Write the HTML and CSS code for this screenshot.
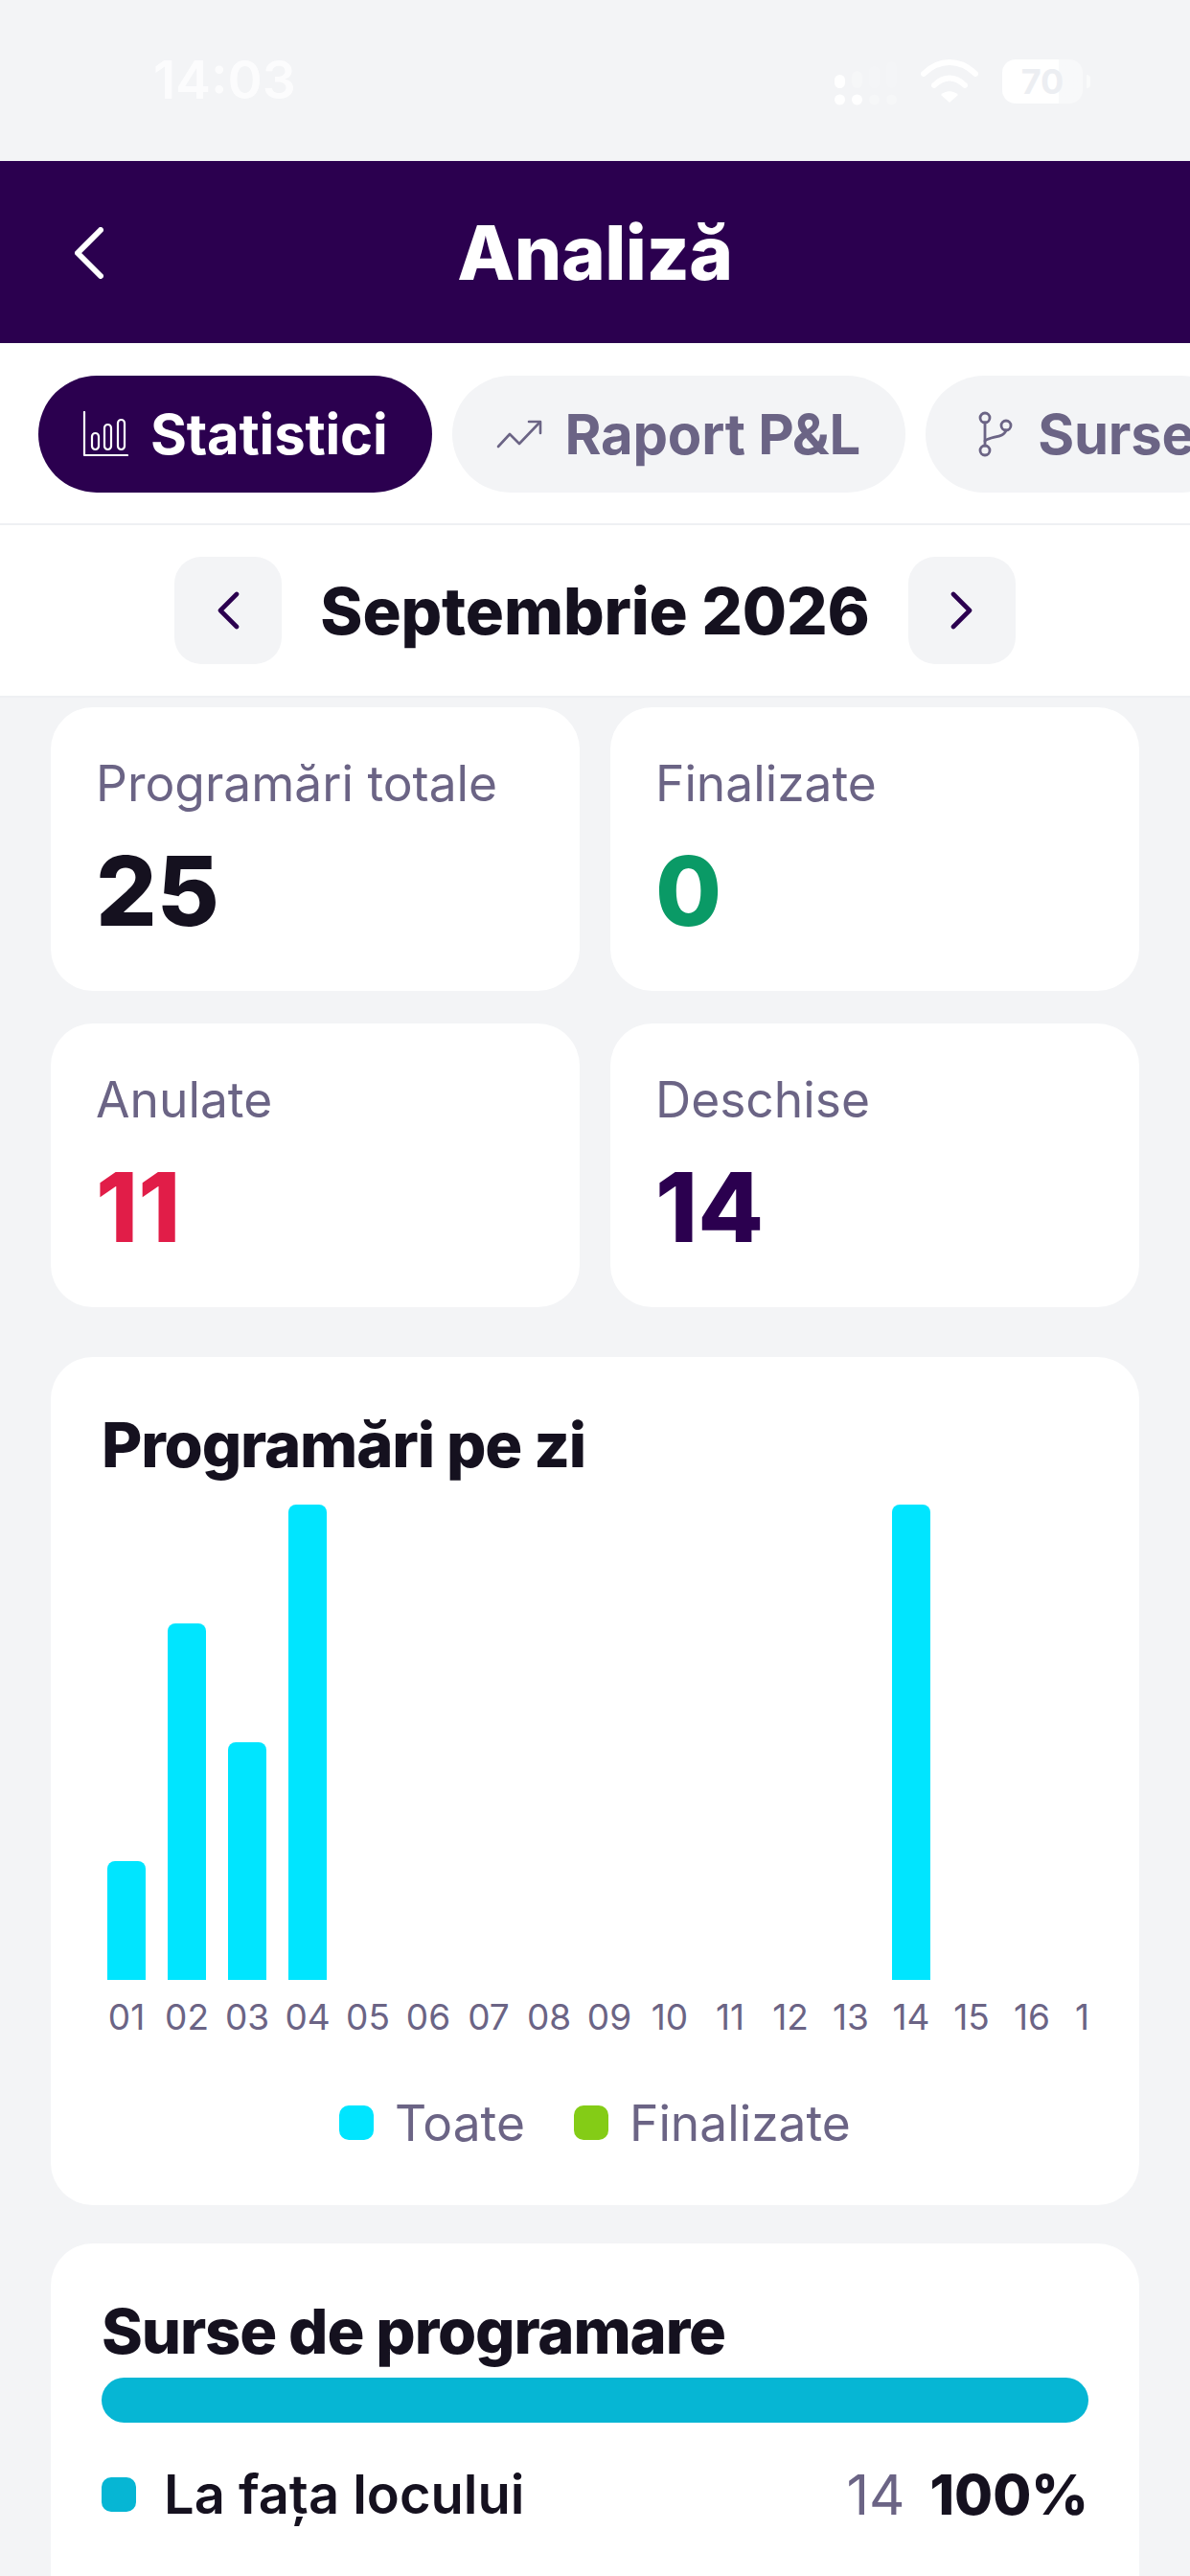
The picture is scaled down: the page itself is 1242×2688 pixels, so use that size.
FILE: index.html
```html
<!DOCTYPE html>
<html lang="ro">
<head>
  <meta charset="UTF-8" />
  <meta name="viewport" content="width=device-width, initial-scale=1.0"/>
  <title>Analiză</title>
  <link rel="stylesheet" href="styles.css">
</head>
<body>
  <div class="app">
    <!-- Status bar -->
    <div class="status-bar">
      <span class="status-time">14:03</span>
      <div class="status-icons">
        <svg class="icon-signal" viewBox="0 0 66 46" fill="#fff">
          <rect x="0" y="14" width="11" height="14" rx="5.5"/>
          <rect x="18" y="10" width="11" height="18" rx="5.5" opacity=".25"/>
          <rect x="36" y="5" width="11" height="23" rx="5.5" opacity=".15"/>
          <rect x="54" y="0" width="11" height="28" rx="5.5" opacity=".1"/>
          <circle cx="5.5" cy="40" r="5.5"/>
          <circle cx="23.5" cy="40" r="5.5"/>
          <circle cx="41.5" cy="40" r="5.5" opacity=".25"/>
          <circle cx="59.5" cy="40" r="5.5" opacity=".25"/>
        </svg>
        <svg class="icon-wifi" viewBox="0 0 60 46" fill="none" stroke="#fff" stroke-width="6" stroke-linecap="round">
          <path d="M3 15C19 -1 41 -1 57 15"/>
          <path d="M14 27C24 17 36 17 46 27"/>
          <path d="M30 45L21 37C26 32 34 32 39 37Z" fill="#fff" stroke="none"/>
        </svg>
        <div class="battery"><div class="battery-body"><span>70</span></div><i class="battery-tip"></i></div>
      </div>
    </div>

    <!-- Header -->
    <header class="top-header">
      <svg class="back-icon" viewBox="0 0 30 54" fill="none" stroke="#fff" stroke-width="6" stroke-linecap="round" stroke-linejoin="round">
        <path d="M27 3L3 27L27 51"/>
      </svg>
      <h1>Analiză</h1>
    </header>

    <!-- Tabs -->
    <nav class="tabs">
      <div class="tab active">
        <svg class="tab-icon" viewBox="0 0 48 48" fill="none" stroke="#fff" stroke-width="2.2" stroke-linecap="round" stroke-linejoin="round">
          <path d="M2 1V46H47"/>
          <rect x="10" y="23" width="7" height="17" rx="3.5"/>
          <rect x="23" y="14" width="7" height="26" rx="3.5"/>
          <rect x="37" y="9" width="7" height="31" rx="3.5"/>
        </svg>
        <span>Statistici</span>
      </div>
      <div class="tab">
        <svg class="tab-icon" viewBox="0 0 48 48" fill="none" stroke="#6b6485" stroke-width="2.6" stroke-linecap="round" stroke-linejoin="round">
          <path d="M2 37L14 24L24 34L45 12"/>
          <path d="M34 11H46V23"/>
        </svg>
        <span>Raport P&amp;L</span>
      </div>
      <div class="tab">
        <svg class="tab-icon" viewBox="0 0 48 48" fill="none" stroke="#6b6485" stroke-width="2.8" stroke-linecap="round" stroke-linejoin="round">
          <circle cx="16" cy="7" r="5"/>
          <circle cx="16" cy="41" r="5"/>
          <circle cx="38" cy="15" r="5"/>
          <path d="M16 12V36"/>
          <path d="M16 31C22 26 36 28 38 20"/>
        </svg>
        <span>Surse</span>
      </div>
    </nav>

    <!-- Month selector -->
    <div class="month-bar">
      <button class="month-btn">
        <svg viewBox="0 0 24 40" fill="none" stroke="#2b004f" stroke-width="4.6" stroke-linecap="round" stroke-linejoin="round"><path d="M21 3L4 20L21 37"/></svg>
      </button>
      <span class="month-title">Septembrie 2026</span>
      <button class="month-btn">
        <svg viewBox="0 0 24 40" fill="none" stroke="#2b004f" stroke-width="4.6" stroke-linecap="round" stroke-linejoin="round"><path d="M3 3L20 20L3 37"/></svg>
      </button>
    </div>

    <main class="content">
      <section class="stats-grid">
        <div class="stat-card">
          <div class="stat-label">Programări totale</div>
          <div class="stat-value">25</div>
        </div>
        <div class="stat-card">
          <div class="stat-label">Finalizate</div>
          <div class="stat-value green">0</div>
        </div>
        <div class="stat-card">
          <div class="stat-label">Anulate</div>
          <div class="stat-value red">11</div>
        </div>
        <div class="stat-card">
          <div class="stat-label">Deschise</div>
          <div class="stat-value purple">14</div>
        </div>
      </section>

      <section class="card chart-card">
        <h3>Programări pe zi</h3>
        <div class="chart">
          <div class="day"><div class="bar-area"><div class="bar" style="height:25%"></div></div><span>01</span></div>
          <div class="day"><div class="bar-area"><div class="bar" style="height:75%"></div></div><span>02</span></div>
          <div class="day"><div class="bar-area"><div class="bar" style="height:50%"></div></div><span>03</span></div>
          <div class="day"><div class="bar-area"><div class="bar" style="height:100%"></div></div><span>04</span></div>
          <div class="day"><div class="bar-area"></div><span>05</span></div>
          <div class="day"><div class="bar-area"></div><span>06</span></div>
          <div class="day"><div class="bar-area"></div><span>07</span></div>
          <div class="day"><div class="bar-area"></div><span>08</span></div>
          <div class="day"><div class="bar-area"></div><span>09</span></div>
          <div class="day"><div class="bar-area"></div><span>10</span></div>
          <div class="day"><div class="bar-area"></div><span>11</span></div>
          <div class="day"><div class="bar-area"></div><span>12</span></div>
          <div class="day"><div class="bar-area"></div><span>13</span></div>
          <div class="day"><div class="bar-area"><div class="bar" style="height:100%"></div></div><span>14</span></div>
          <div class="day"><div class="bar-area"></div><span>15</span></div>
          <div class="day"><div class="bar-area"></div><span>16</span></div>
          <div class="day"><div class="bar-area"></div><span>17</span></div>
        </div>
        <div class="legend">
          <div class="legend-item"><i class="swatch cyan"></i>Toate</div>
          <div class="legend-item"><i class="swatch lime"></i>Finalizate</div>
        </div>
      </section>

      <section class="card source-card">
        <h3>Surse de programare</h3>
        <div class="source-bar"></div>
        <div class="source-row">
          <i class="swatch teal"></i>
          <span class="source-name">La fața locului</span>
          <span class="source-count">14</span>
          <span class="source-pct">100%</span>
        </div>
      </section>
    </main>
  </div>
</body>
</html>
```

FILE: styles.css
```css
* {
  box-sizing: border-box;
}

html, body {
  margin: 0;
  padding: 0;
}

body {
  font-family: 'Inter', 'Liberation Sans', sans-serif;
  background: #f3f4f6;
  color: #15111f;
}

.app {
  width: 1242px;
  height: 2688px;
  overflow: hidden;
  background: #f3f4f6;
}

/* Status bar */
.status-bar {
  height: 168px;
  display: flex;
  justify-content: space-between;
  align-items: flex-start;
  padding: 50px 104px 0 160px;
}

.status-time {
  font-size: 55px;
  line-height: 66px;
  font-weight: 600;
  color: #fff;
  opacity: .8;
}

.status-icons {
  display: flex;
  align-items: flex-start;
  gap: 22px;
  padding-top: 12px;
}

.icon-signal {
  width: 66px;
  height: 46px;
  margin-top: 2px;
  margin-right: 2px;
}

.icon-wifi {
  width: 60px;
  height: 46px;
  margin-right: 3px;
}

.battery {
  display: flex;
  align-items: center;
  gap: 4px;
}

.battery-body {
  width: 84px;
  height: 46px;
  border-radius: 14px;
  background: linear-gradient(to right, #fff 70%, rgba(255,255,255,.45) 70%);
  display: flex;
  align-items: center;
  justify-content: center;
}

.battery-body span {
  font-size: 36px;
  font-weight: 700;
  color: #eceef2;
}

.battery-tip {
  width: 4px;
  height: 14px;
  border-radius: 0 4px 4px 0;
  background: rgba(255,255,255,.6);
}

/* Header */
.top-header {
  height: 190px;
  background: #2b004f;
  position: relative;
  display: flex;
  align-items: center;
  justify-content: center;
}

.top-header h1 {
  margin: 0;
  font-size: 78px;
  font-weight: 800;
  letter-spacing: -.5px;
  color: #fff;
}

.back-icon {
  position: absolute;
  left: 78px;
  top: 69px;
  width: 30px;
  height: 54px;
}

/* Tabs */
.tabs {
  height: 190px;
  background: #fff;
  border-bottom: 2px solid #eef0f3;
  display: flex;
  gap: 21px;
  padding: 34px 0 0 40px;
  overflow: hidden;
}

.tab {
  flex: none;
  height: 122px;
  border-radius: 61px;
  background: #f3f4f6;
  color: #6b6485;
  display: flex;
  align-items: center;
  gap: 23px;
  padding: 0 47px 0 46px;
  font-size: 58px;
  font-weight: 700;
  letter-spacing: -.2px;
}

.tab.active {
  background: #2b004f;
  color: #fff;
}

.tab-icon {
  width: 48px;
  height: 48px;
  flex: none;
}

/* Month selector */
.month-bar {
  height: 180px;
  background: #fff;
  border-bottom: 2px solid #eef0f3;
  display: flex;
  align-items: center;
  justify-content: center;
  gap: 40px;
  padding-right: 0;
}

.month-btn {
  width: 112px;
  height: 112px;
  border: none;
  border-radius: 28px;
  background: #f3f4f6;
  display: flex;
  align-items: center;
  justify-content: center;
  padding: 0;
}

.month-btn svg {
  width: 24px;
  height: 40px;
}

.month-title {
  font-size: 67px;
  font-weight: 800;
  letter-spacing: -.15px;
  color: #15111f;
}

/* Content */
.content {
  padding: 10px 53px 0;
}

.stats-grid {
  display: grid;
  grid-template-columns: 552px 552px;
  column-gap: 32px;
  row-gap: 34px;
}

.stat-card {
  height: 296px;
  background: #fff;
  border-radius: 44px;
  padding: 48px 47px 0;
}

.stat-label {
  font-size: 51.5px;
  line-height: 62px;
  color: #6b6485;
}

.stat-value {
  margin-top: 22px;
  font-size: 100px;
  line-height: 120px;
  font-weight: 800;
  color: #15111f;
}

.stat-value.green { color: #0a9a66; }
.stat-value.red { color: #e11d48; }
.stat-value.purple { color: #2b004f; }

.card {
  background: #fff;
  border-radius: 44px;
  padding: 48px 53px 0;
}

.card h3 {
  margin: 0;
  font-size: 65px;
  line-height: 88px;
  font-weight: 800;
  letter-spacing: -1.15px;
  color: #15111f;
}

.chart-card {
  height: 885px;
  margin-top: 52px;
}

.chart {
  display: flex;
  gap: 23px;
  margin-top: 18px;
  padding-left: 6px;
  overflow: hidden;
}

.day {
  flex: none;
  width: 40px;
  display: flex;
  flex-direction: column;
  align-items: center;
}

.bar-area {
  width: 40px;
  height: 496px;
  display: flex;
  align-items: flex-end;
}

.bar {
  width: 100%;
  background: #00e5ff;
  border-radius: 8px 8px 0 0;
}

.day span {
  margin-top: 16px;
  font-size: 37px;
  line-height: 46px;
  color: #6b6485;
  white-space: nowrap;
}

.legend {
  display: flex;
  justify-content: center;
  gap: 51px;
  margin-top: 56px;
}

.legend-item {
  display: flex;
  align-items: center;
  gap: 22px;
  font-size: 51.5px;
  line-height: 62px;
  color: #6b6485;
}

.swatch {
  display: block;
  flex: none;
  width: 36px;
  height: 36px;
  border-radius: 10px;
}

.swatch.cyan { background: #00e5ff; }
.swatch.lime { background: #84cc16; }
.swatch.teal { background: #06b6d4; }

.source-card {
  margin-top: 40px;
  height: 500px;
}

.source-bar {
  height: 47px;
  margin-top: 4px;
  border-radius: 24px;
  background: #06b6d4;
}

.source-row {
  display: flex;
  align-items: center;
  margin-top: 44px;
  font-size: 56px;
  line-height: 62px;
}

.source-name {
  margin-left: 29px;
  font-weight: 600;
  color: #15111f;
}

.source-count {
  margin-left: auto;
  font-size: 58px;
  color: #6b6485;
}

.source-pct {
  margin-left: 26px;
  font-size: 58px;
  font-weight: 800;
  color: #15111f;
}
```
